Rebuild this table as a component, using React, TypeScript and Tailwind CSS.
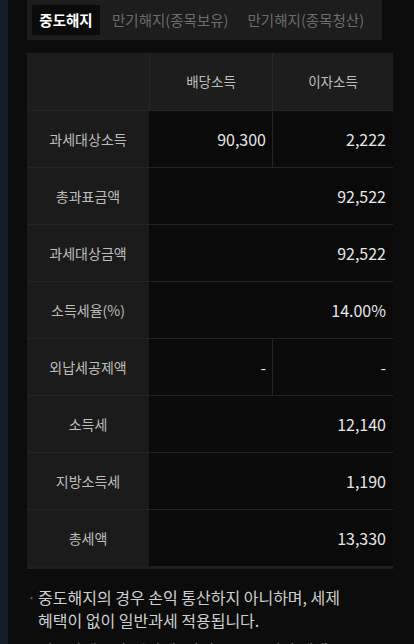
// 세금 계산 결과 — 중도해지 탭 + 소득별 세액 표 + 안내 문구

const FONT = { fontFamily: '"Noto Sans CJK KR", "Noto Sans", sans-serif' };

type Row = { label: string; a?: string; b?: string; merged?: string };

const ROWS: Row[] = [
  { label: "과세대상소득", a: "90,300", b: "2,222" },
  { label: "총과표금액", merged: "92,522" },
  { label: "과세대상금액", merged: "92,522" },
  { label: "소득세율(%)", merged: "14.00%" },
  { label: "외납세공제액", a: "-", b: "-" },
  { label: "소득세", merged: "12,140" },
  { label: "지방소득세", merged: "1,190" },
  { label: "총세액", merged: "13,330" },
];

function Tabs() {
  return (
    <div className="flex h-10 w-[355px] items-center bg-[#1d1d1d] px-[5px]">
      <span className="flex h-[30px] w-[68px] items-center justify-center rounded-[2px] bg-[#0b0b0b] text-[14.5px] font-bold text-white">
        중도해지
      </span>
      <span className="ml-[12px] text-[14.5px] text-[#6c6c6c]">만기해지(종목보유)</span>
      <span className="ml-[19px] text-[14.5px] text-[#6c6c6c]">만기해지(종목청산)</span>
    </div>
  );
}

function TaxTable() {
  return (
    <div className="mt-[13px] w-[366px] border-b-[3px] border-[#1f1f1f]">
      <div className="grid h-[57px] grid-cols-[122px_123px_121px] bg-[#1d1d1d] text-[13.5px] text-[#bdbdbd]">
        <div />
        <div className="flex items-center justify-center border-l border-[#272727]">배당소득</div>
        <div className="flex items-center justify-center border-l border-[#272727]">이자소득</div>
      </div>
      {ROWS.map((r) => (
        <div key={r.label} className="grid h-[57px] grid-cols-[122px_244px] border-t border-[#242424]">
          <div className="flex items-center justify-center bg-[#1b1b1b] text-[14px] text-[#bdbdbd]">
            {r.label}
          </div>
          {r.merged ? (
            <div className="flex items-center justify-end bg-[#0a0a0a] pr-[7px] text-[16px] text-[#e6e6e6]">
              {r.merged}
            </div>
          ) : (
            <div className="grid grid-cols-[123px_121px] bg-[#0a0a0a] text-[16px] text-[#e6e6e6]">
              <div className="flex items-center justify-end pr-[6px]">{r.a}</div>
              <div className="flex items-center justify-end border-l border-[#232323] pr-[7px]">{r.b}</div>
            </div>
          )}
        </div>
      ))}
    </div>
  );
}

export default function App() {
  return (
    <div className="flex h-[644px] w-[414px] overflow-hidden bg-[#0c0c0c]" style={FONT}>
      <div className="w-2 shrink-0 bg-[#161d2a]" />
      <div className="flex-1 pl-[19px]">
        <Tabs />
        <TaxTable />
        <div className="mt-[17px] text-[16px] leading-[23px] text-[#cfcfcf]">
          <div className="flex">
            <span className="w-[11px] shrink-0 text-[#5c5c5c]">·</span>
            <p>
              중도해지의 경우 손익 통산하지 아니하며, 세제
              <br />
              혜택이 없이 일반과세 적용됩니다.
            </p>
          </div>
          <div className="mt-[7px] flex">
            <span className="w-[11px] shrink-0 text-[#5c5c5c]">·</span>
            <p>이중과세조정(외납세) 반영 시 중도해지 세액은</p>
          </div>
        </div>
      </div>
    </div>
  );
}
